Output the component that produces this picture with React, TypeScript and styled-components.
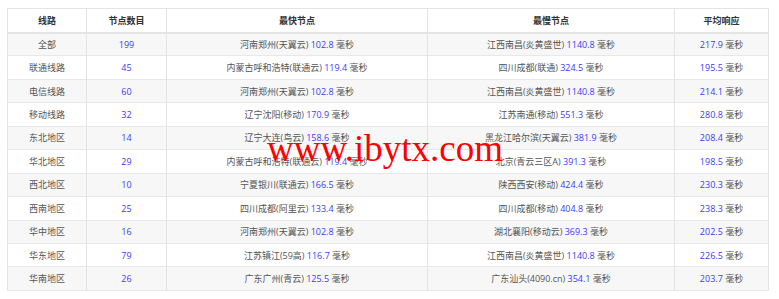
import React, { FC } from "react";
import styled, { createGlobalStyle } from "styled-components";

const GlobalStyle = createGlobalStyle`
    html, body {
        margin: 0;
        padding: 0;
        background: #ffffff;
    }
`;

const Page = styled.div`
    position: relative;
    width: 779px;
    height: 299px;
    padding: 8px 11px 0 7px;
    box-sizing: border-box;
    font-family: "Open Sans", "Noto Sans CJK SC", sans-serif;
`;

const Table = styled.table`
    width: 761px;
    table-layout: fixed;
    border-collapse: collapse;
    border: 1px solid #e4e4e4;
    font-size: 9px;
    color: #555555;
`;

const HeadRow = styled.tr`
    height: 24px;
    border-bottom: 2px solid #e4e4e4;
`;

const HeadCell = styled.th`
    border-right: 1px solid #e4e4e4;
    font-weight: bold;
    color: #333333;
    text-align: center;
    padding: 0;
`;

const Row = styled.tr<{ $shaded: boolean }>`
    height: 23.45px;
    background: ${(p) => (p.$shaded ? "#f7f7f7" : "#ffffff")};
    border-bottom: 1px solid #e8e8e8;
`;

const Cell = styled.td`
    border-right: 1px solid #e4e4e4;
    text-align: center;
    padding: 0;
    white-space: nowrap;
`;

const Num = styled.span`
    color: #3c3cf6;
`;

// 水印叠在表格上面
const Watermark = styled.div`
    position: absolute;
    left: 267px;
    top: 130px;
    font-family: "Liberation Serif", serif;
    font-size: 37px;
    line-height: 1;
    color: #ff0000;
    pointer-events: none;
`;

type Line = [string, number, string, string, string, string, string];

const lines: Line[] = [
    ["全部", 199, "河南郑州(天翼云)", "102.8", "江西南昌(炎黄盛世)", "1140.8", "217.9"],
    ["联通线路", 45, "内蒙古呼和浩特(联通云)", "119.4", "四川成都(联通)", "324.5", "195.5"],
    ["电信线路", 60, "河南郑州(天翼云)", "102.8", "江西南昌(炎黄盛世)", "1140.8", "214.1"],
    ["移动线路", 32, "辽宁沈阳(移动)", "170.9", "江苏南通(移动)", "551.3", "280.8"],
    ["东北地区", 14, "辽宁大连(鸟云)", "158.6", "黑龙江哈尔滨(天翼云)", "381.9", "208.4"],
    ["华北地区", 29, "内蒙古呼和浩特(联通云)", "119.4", "北京(青云三区A)", "391.3", "198.5"],
    ["西北地区", 10, "宁夏银川(联通云)", "166.5", "陕西西安(移动)", "424.4", "230.3"],
    ["西南地区", 25, "四川成都(阿里云)", "133.4", "四川成都(移动)", "404.8", "238.3"],
    ["华中地区", 16, "河南郑州(天翼云)", "102.8", "湖北襄阳(移动云)", "369.3", "202.5"],
    ["华东地区", 79, "江苏镇江(59高)", "116.7", "江西南昌(炎黄盛世)", "1140.8", "226.5"],
    ["华南地区", 26, "广东广州(青云)", "125.5", "广东汕头(4090.cn)", "354.1", "203.7"],
];

const App: FC = () => {
    return (
        <Page>
            <GlobalStyle />
            <Table>
                <colgroup>
                    <col style={{ width: 79 }} />
                    <col style={{ width: 80 }} />
                    <col style={{ width: 261 }} />
                    <col style={{ width: 247 }} />
                    <col style={{ width: 94 }} />
                </colgroup>
                <thead>
                    <HeadRow>
                        <HeadCell>线路</HeadCell>
                        <HeadCell>节点数目</HeadCell>
                        <HeadCell>最快节点</HeadCell>
                        <HeadCell>最慢节点</HeadCell>
                        <HeadCell>平均响应</HeadCell>
                    </HeadRow>
                </thead>
                <tbody>
                    {lines.map(([name, count, fast, fastMs, slow, slowMs, avg], i) => (
                        <Row key={name} $shaded={i % 2 === 0}>
                            <Cell>{name}</Cell>
                            <Cell>
                                <Num>{count}</Num>
                            </Cell>
                            <Cell>
                                {fast} <Num>{fastMs}</Num> 毫秒
                            </Cell>
                            <Cell>
                                {slow} <Num>{slowMs}</Num> 毫秒
                            </Cell>
                            <Cell>
                                <Num>{avg}</Num> 毫秒
                            </Cell>
                        </Row>
                    ))}
                </tbody>
            </Table>
            <Watermark>www.ibytx.com</Watermark>
        </Page>
    );
};

export default App;
